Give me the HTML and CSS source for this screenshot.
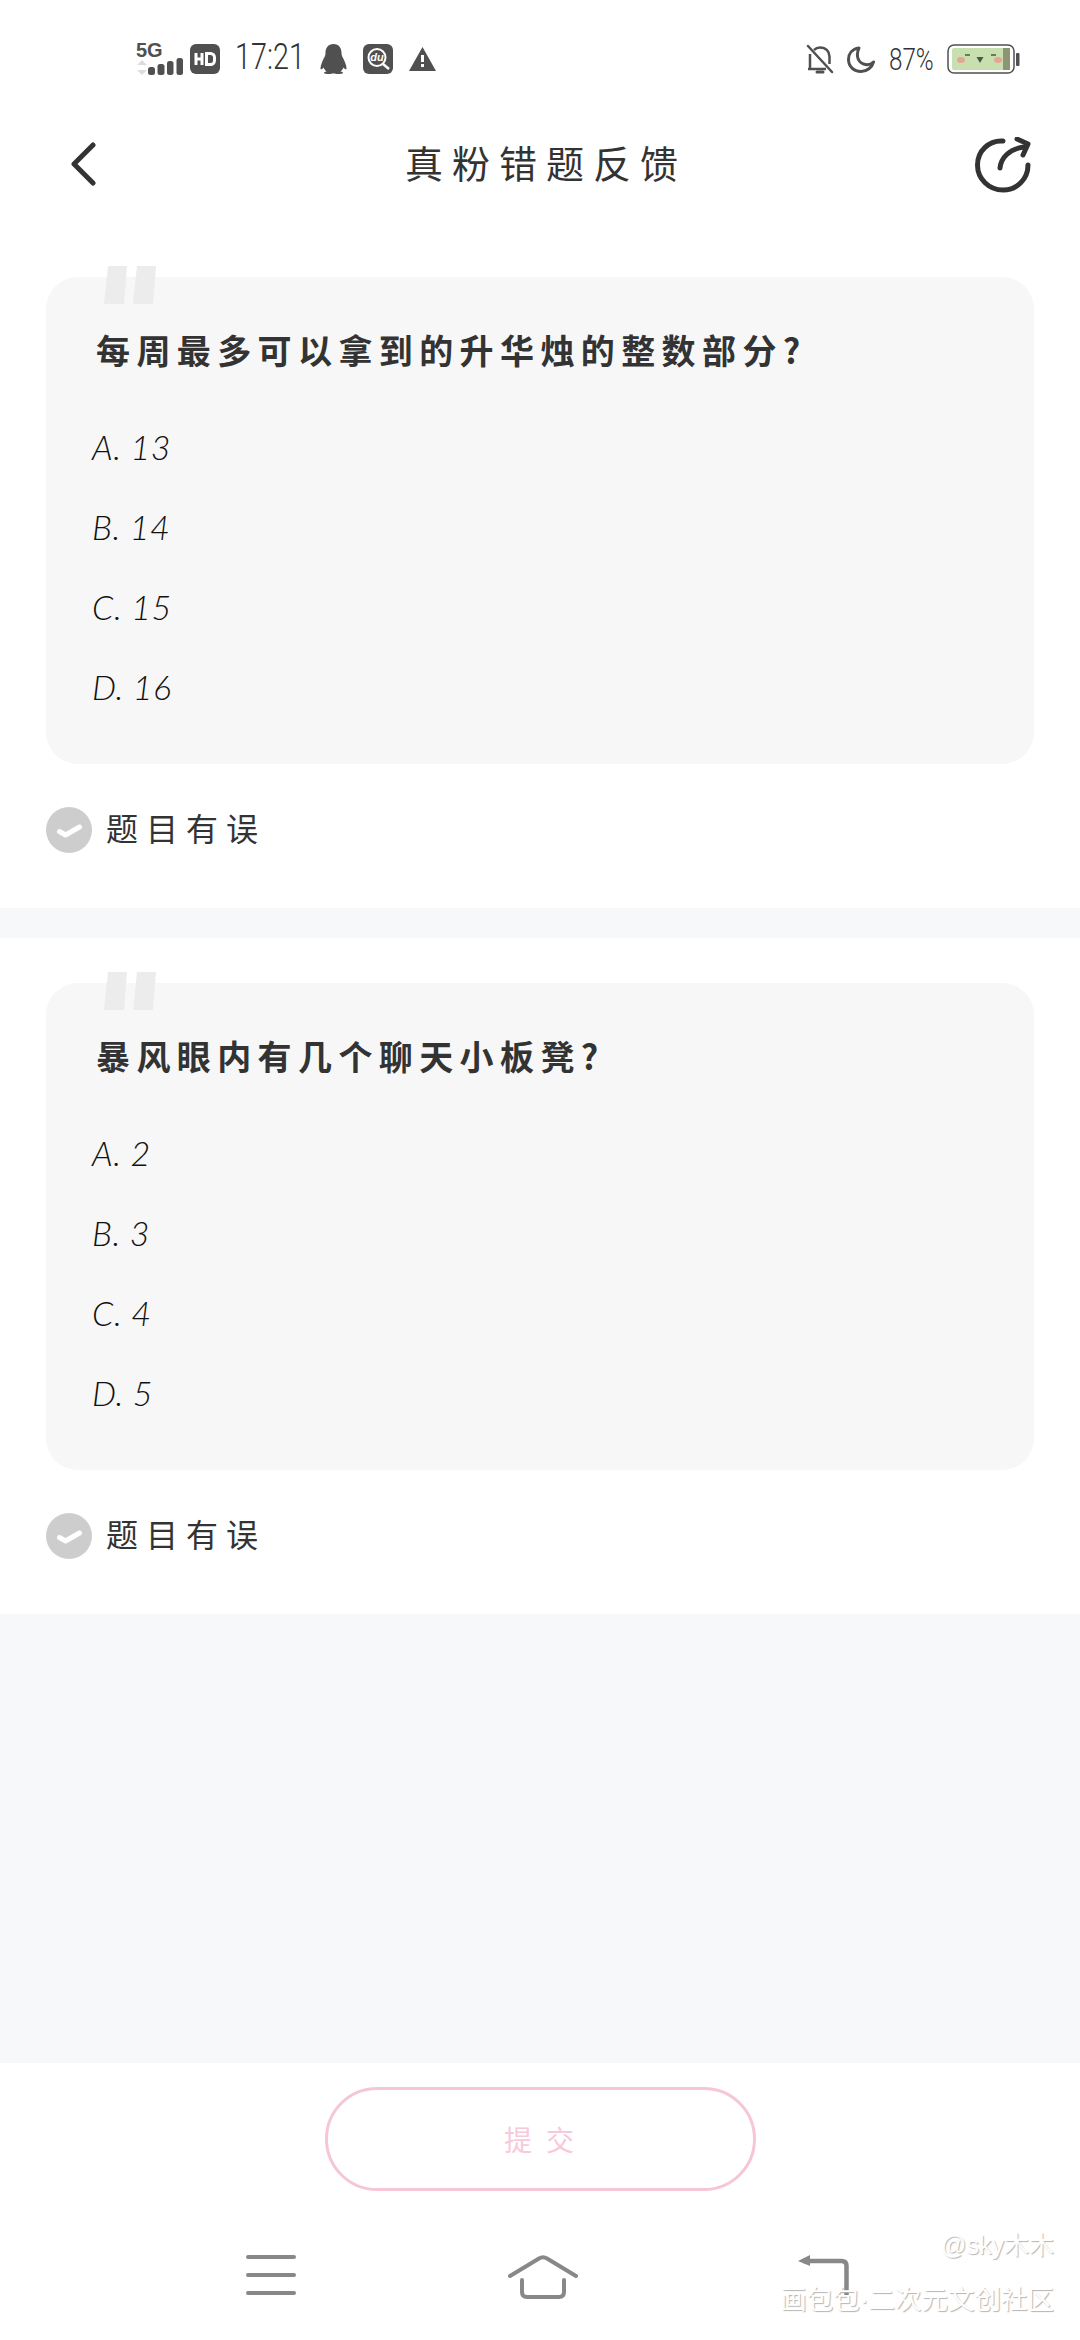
FILE: index.html
```html
<!DOCTYPE html>
<html lang="zh">
<head>
<meta charset="utf-8">
<title>真粉错题反馈</title>
<link rel="stylesheet" href="styles.css">
</head>
<body>
<div class="page">
  <div class="status">
    <div class="status-group">
      <svg class="ic-signal" width="47" height="40" viewBox="0 -7 47 40">
        <text x="0" y="14" class="net">5G</text>
        <path d="M6 17l5 5H1zM6 32l5-5H1z" fill="#dcdcdc"/>
        <rect x="12" y="24" width="7" height="8" rx="2.5" fill="#505050"/>
        <rect x="21.500" y="21" width="7" height="11" rx="2.500" fill="#505050"/>
        <rect x="31" y="18" width="6.500" height="14" rx="2.500" fill="#505050"/>
        <rect x="40.500" y="15" width="6.500" height="17" rx="2.500" fill="#505050"/>
      </svg>
      <svg class="ic-hd" width="30" height="30" viewBox="0 0 30 30">
        <rect width="30" height="30" rx="6" fill="#505050"/>
        <path d="M6 9v12M12 9v12M6 15h6" stroke="#fff" stroke-width="3" fill="none"/>
        <path d="M16.500 9.500h4a4 4 0 0 1 4 4v3a4 4 0 0 1-4 4h-4z" stroke="#fff" stroke-width="3" fill="none"/>
      </svg>
      <span class="time">17:21</span>
      <svg class="ic-qq" width="27" height="30" viewBox="0 0 27 30">
        <path d="M13.500 0c5.500 0 8 4 8 9 0 2 .5 3 1.500 5 2 3.500 3.500 8 3.500 10.500 0 1.500-1.500 1-3-1-.5 1.500-1.500 2.800-3 3.800 1.500.5 2.500 1.200 2.500 1.700 0 .7-3 1-5 1-2 0-3-.5-4.500-.5S11 30 9 30s-5-.3-5-1c0-.5 1-1.200 2.500-1.700-1.500-1-2.500-2.300-3-3.800-1.500 2-3 2.500-3 1C.5 22 2 17.500 4 14c1-2 1.500-3 1.500-5 0-5 2.500-9 8-9z" fill="#505050"/>
      </svg>
      <svg class="ic-du" width="30" height="30" viewBox="0 0 30 30">
        <rect width="30" height="30" rx="6" fill="#505050"/>
        <circle cx="14" cy="13.500" r="8.500" fill="#505050" stroke="#fff" stroke-width="2"/>
        <path d="M20 20l6 5" stroke="#fff" stroke-width="2.500"/>
        <text x="14" y="17" class="du">du</text>
      </svg>
      <svg class="ic-warn" width="27" height="24" viewBox="0 0 27 24">
        <path d="M13.500 0L27 24H0z" fill="#505050"/>
        <path d="M13.500 8v7" stroke="#fff" stroke-width="3"/>
        <rect x="12" y="17" width="3" height="3" fill="#fff"/>
      </svg>
    </div>
    <div class="status-group">
      <svg class="ic-bell" width="28" height="30" viewBox="0 0 28 30" fill="none" stroke="#505050" stroke-width="2.500">
        <path d="M2 2l24 26" stroke-linecap="round"/>
        <path d="M4 10v14M8 6c2-2 3-2.500 6-2.500 6 0 9.500 4 9.500 9V20M2 25h18"/>
        <path d="M11 28h6" stroke-width="3" stroke-linecap="round"/>
      </svg>
      <svg class="ic-moon" width="28" height="27" viewBox="0 0 28 27" fill="none" stroke="#505050" stroke-width="3">
        <path d="M12 2C5 3 1.500 8 1.500 13.500 1.500 20.500 7 25.500 14 25.500c6 0 11-4 12.500-9.500-2 2-5 3-8 2.500C12 17.500 8 11 12 2z" stroke-linejoin="round"/>
      </svg>
      <span class="pct">87%</span>
      <svg class="ic-batt" width="73" height="30" viewBox="0 0 73 30">
        <rect x="1" y="1" width="66" height="28" rx="6" fill="#fff" stroke="#505050" stroke-width="1.500"/>
        <rect x="5" y="4" width="58" height="22" rx="2" fill="#c8dfb0"/>
        <rect x="56" y="4" width="7" height="22" fill="#8c9674"/>
        <rect x="69" y="9" width="3.500" height="13" rx="1" fill="#505050"/>
        <ellipse cx="14" cy="16" rx="4" ry="3" fill="#e3a78f"/>
        <ellipse cx="51" cy="16" rx="4" ry="3" fill="#e3a78f"/>
        <path d="M18 11h5M44 11h5" stroke="#4b5a44" stroke-width="1.500"/>
        <path d="M29.500 13h7l-3.500 6z" fill="#4b5a44"/>
      </svg>
    </div>
  </div>

  <header class="nav">
    <svg class="nav-back" width="26" height="44" viewBox="0 0 26 44" fill="none" stroke="#333" stroke-width="5" stroke-linecap="round" stroke-linejoin="round">
      <path d="M23 3L4 22l19 19"/>
    </svg>
    <h1 class="nav-title">真粉错题反馈</h1>
    <svg class="nav-share" width="56" height="56" viewBox="0 0 56 56" fill="none" stroke="#333" stroke-width="5" stroke-linecap="round" stroke-linejoin="round">
      <path d="M28 4C14 3 2.500 14 2.500 28S14 53 28 53s25-11 25-25"/>
      <path d="M25 31c1-10 9-19 24-21"/>
      <path d="M42 2l11 5-5 11"/>
    </svg>
  </header>

  <section class="question first">
    <svg class="quote" width="52" height="38" viewBox="0 0 52 38"><path d="M4 0h19l-3 38H0zM33 0h19l-3 38H29z" fill="#ececec"/></svg>
    <div class="card">
      <h2 class="q-title">每周最多可以拿到的升华烛的整数部分?</h2>
      <p class="opt">A. 13</p>
      <p class="opt">B. 14</p>
      <p class="opt">C. 15</p>
      <p class="opt">D. 16</p>
    </div>
    <div class="report">
      <svg class="check" width="46" height="46" viewBox="0 0 46 46">
        <circle cx="23" cy="23" r="23" fill="#cdcdcd"/>
        <path d="M13.500 24.500l6 3.500 14-8" fill="none" stroke="#fff" stroke-width="5" stroke-linecap="round" stroke-linejoin="round"/>
      </svg>
      <span class="report-text">题目有误</span>
    </div>
  </section>

  <div class="divider"></div>

  <section class="question">
    <svg class="quote" width="52" height="38" viewBox="0 0 52 38"><path d="M4 0h19l-3 38H0zM33 0h19l-3 38H29z" fill="#ececec"/></svg>
    <div class="card">
      <h2 class="q-title">暴风眼内有几个聊天小板凳?</h2>
      <p class="opt">A. 2</p>
      <p class="opt">B. 3</p>
      <p class="opt">C. 4</p>
      <p class="opt">D. 5</p>
    </div>
    <div class="report">
      <svg class="check" width="46" height="46" viewBox="0 0 46 46">
        <circle cx="23" cy="23" r="23" fill="#cdcdcd"/>
        <path d="M13.500 24.500l6 3.500 14-8" fill="none" stroke="#fff" stroke-width="5" stroke-linecap="round" stroke-linejoin="round"/>
      </svg>
      <span class="report-text">题目有误</span>
    </div>
  </section>

  <div class="filler"></div>

  <div class="action">
    <button class="submit">提交</button>
  </div>

  <nav class="sysnav">
    <svg width="50" height="40" viewBox="0 0 50 40" stroke="#888" stroke-width="4" stroke-linecap="round">
      <path d="M2 2h46M2 20h46M2 38h46"/>
    </svg>
    <svg class="sys-home" width="70" height="44" viewBox="0 0 70 44" fill="none" stroke="#888" stroke-width="4" stroke-linecap="round" stroke-linejoin="round">
      <path d="M2 21L31 3.500q4-2.500 8 0L68 21"/>
      <path d="M14 25v12q0 5 5 5h32q5 0 5-5V25"/>
    </svg>
    <svg width="52" height="44" viewBox="0 0 52 44" fill="none">
      <path d="M49.500 42V11q0-5-5-5H6" stroke="#888" stroke-width="4.500"/>
      <path d="M13 0v11L1 6z" fill="#888"/>
    </svg>
  </nav>

  <div class="watermark">
    <span class="wm-user">@sky木木</span>
    <span class="wm-site">画包包·二次元文创社区</span>
  </div>
</div>
</body>
</html>
```

FILE: styles.css
```css
* { box-sizing: border-box; }
html, body { margin: 0; padding: 0; }
body {
  width: 1080px;
  height: 2340px;
  background: #fff;
  font-family: "Noto Sans CJK SC", "Noto Sans", sans-serif;
  color: #333;
}
.page {
  position: relative;
  width: 1080px;
  height: 2340px;
  display: flex;
  flex-direction: column;
  overflow: hidden;
}

/* status bar */
.status {
  height: 118px;
  flex: none;
  padding: 0 60px 0 136px;
  display: flex;
  justify-content: space-between;
  align-items: center;
}
.status-group { display: flex; align-items: center; }
.net { font: 700 20px "Liberation Sans", sans-serif; fill: #505050; }
.du { font: italic 700 11px "Liberation Sans", sans-serif; fill: #fff; text-anchor: middle; }
.ic-signal { margin-right: 7px; margin-top: -6px; }
.time {
  display: inline-block;
  font: 300 36px/1 "Roboto", sans-serif;
  color: #333;
  width: 66px;
  margin: -4px 19px 0 15px;
  white-space: nowrap;
  transform: scaleX(.8);
  transform-origin: left center;
}
.ic-qq { margin-right: 16px; }
.ic-du { margin-right: 16px; }
.ic-bell { margin-right: 13px; }
.ic-moon { margin-right: 14px; }
.pct {
  display: inline-block;
  font: 300 31px/1 "Roboto", sans-serif;
  color: #333;
  width: 44px;
  margin-right: 14px;
  white-space: nowrap;
  transform: scaleX(.78);
  transform-origin: left center;
}

/* nav */
.nav {
  position: relative;
  flex: none;
  height: 92px;
  display: flex;
  align-items: center;
  justify-content: space-between;
  padding: 0 49px 0 70px;
}
.nav-title {
  position: absolute;
  left: 0;
  right: 0;
  margin: -5px 0 0;
  padding-left: 12px;
  text-align: center;
  font-size: 38px;
  font-weight: 400;
  letter-spacing: 9px;
  color: #333;
}
.nav-back { margin-top: -1px; }
.nav-share { margin-top: 2px; }

/* question */
.question {
  position: relative;
  flex: none;
  padding: 45px 46px 55px;
}
.question.first { padding-top: 67px; }
.quote {
  position: absolute;
  left: 104px;
  bottom: 604px;
}
.card {
  height: 487px;
  background: #f7f7f8;
  border-radius: 32px;
  padding: 40px 46px 0;
}
.q-title {
  margin: 0 0 24px 4px;
  font-size: 34px;
  line-height: 66px;
  font-weight: 700;
  letter-spacing: 6.400px;
  color: #333;
}
.opt {
  margin: 0;
  height: 80px;
  font: italic 300 34px/80px "Lato", sans-serif;
  letter-spacing: .5px;
  color: #111;
}
.report {
  margin-top: 43px;
  height: 46px;
  display: flex;
  align-items: center;
  gap: 14px;
}
.report-text {
  padding-bottom: 6px;
  font-size: 32px;
  letter-spacing: 8px;
  color: #333;
}
.divider { flex: none; height: 30px; background: #f7f8fa; }
.filler { flex: 1; background: #f7f8fa; }

/* bottom */
.action {
  flex: none;
  height: 138px;
  padding-top: 24px;
  display: flex;
  justify-content: center;
}
.submit {
  width: 431px;
  height: 104px;
  padding: 0 0 0 12px;
  background: #fff;
  border: 3px solid #f6c6d8;
  border-radius: 52px;
  font-family: inherit;
  font-size: 28px;
  letter-spacing: 14px;
  color: #f8c9da;
}
.sysnav {
  flex: none;
  height: 139px;
  padding: 54px 231px 0 246px;
  display: flex;
  justify-content: space-between;
  align-items: flex-start;
}
.sys-home { margin-left: -8px; }
.watermark {
  position: absolute;
  right: 26px;
  bottom: 27px;
  display: flex;
  flex-direction: column;
  align-items: flex-end;
  color: #fff;
  text-shadow: 1px 1px 1px #b5b5b5;
  font-family: "Liberation Sans", "Noto Sans CJK SC", sans-serif;
  line-height: 1;
}
.wm-user { font-size: 25px; margin-bottom: 29px; }
.wm-site { font-size: 26.500px; }
```
